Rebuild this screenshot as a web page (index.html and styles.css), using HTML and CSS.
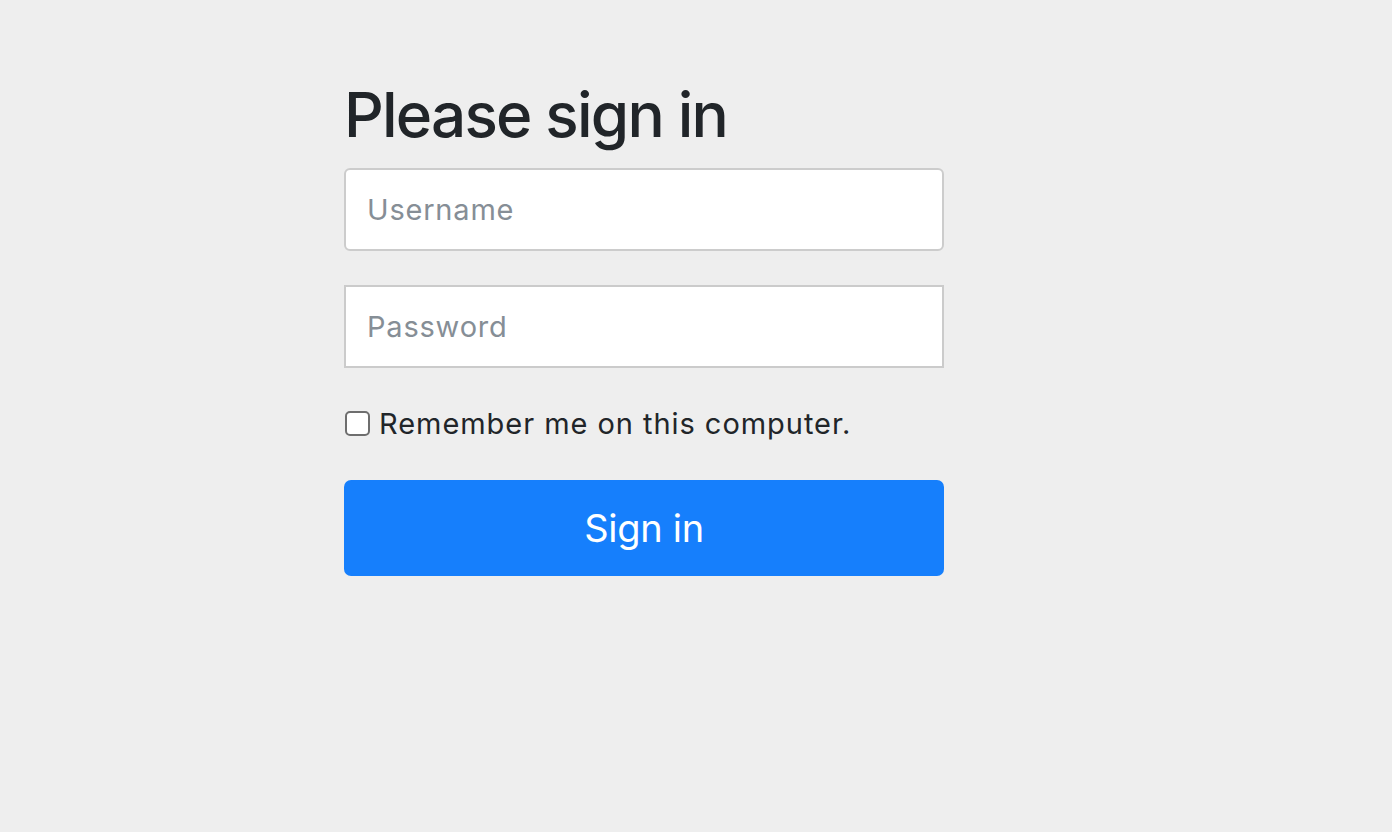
FILE: index.html
```html
<!DOCTYPE html>
<html lang="en">
<head>
  <meta charset="UTF-8" />
  <title>Please sign in</title>
  <link rel="stylesheet" href="styles.css">
</head>
<body>
  <div class="container">
    <form class="form-signin" method="post" action="/login">
      <h2 class="form-signin-heading">Please sign in</h2>
      <p>
        <input type="text" id="username" name="username" class="form-control" placeholder="Username" />
      </p>
      <p>
        <input type="password" id="password" name="password" class="form-control" placeholder="Password" />
      </p>
      <p class="remember">
        <input type="checkbox" id="remember-me" name="remember-me" />
        <label for="remember-me">Remember me on this computer.</label>
      </p>
      <button class="btn-signin" type="submit">Sign in</button>
    </form>
  </div>
</body>
</html>
```

FILE: styles.css
```css
body, html {
  margin: 0;
  padding: 0;
  font-family: Inter, 'Liberation Sans', sans-serif;
  color: #212529;
  background-color: #eee;
}

.container {
  padding-top: 78px;
  padding-left: 344px;
}

.form-signin {
  width: 600px;
}

.form-signin-heading {
  font-size: 62px;
  font-weight: 500;
  line-height: 1.2;
  margin: 0 0 16px 0;
  letter-spacing: -1.8px;
}

.form-signin p {
  margin: 0 0 34px 0;
}

.form-control {
  display: block;
  box-sizing: border-box;
  width: 100%;
  height: 83px;
  padding: 0 21px;
  font-family: inherit;
  font-size: 29px;
  letter-spacing: 0.8px;
  color: #495057;
  background: #fff;
  border: 2px solid #ccc;
  border-radius: 6px;
}

.form-control::placeholder {
  color: #868e96;
}

#password {
  border-radius: 0;
  border-color: #cbcbcb;
}

.form-signin .remember {
  display: flex;
  align-items: center;
  gap: 9px;
  font-size: 29px;
  letter-spacing: 0.95px;
  color: #212529;
  height: 36px;
  margin: 37px 0 39px 1px;
}

.remember input {
  appearance: none;
  box-sizing: border-box;
  width: 25px;
  height: 25px;
  margin: 0;
  background: #fff;
  border: 2px solid #6e6e6e;
  border-radius: 5px;
}

.btn-signin {
  display: block;
  width: 100%;
  height: 96px;
  font-family: inherit;
  font-size: 38px;
  letter-spacing: -0.3px;
  color: #fff;
  background: #167ffc;
  border: none;
  border-radius: 7px;
  cursor: pointer;
}
```
